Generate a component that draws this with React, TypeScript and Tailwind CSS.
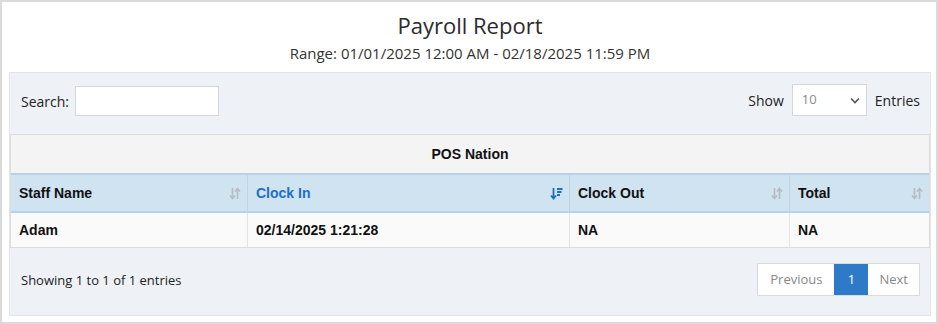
import React from "react";

const columns = [
  { label: "Staff Name", width: "w-[236px]", active: false },
  { label: "Clock In", width: "w-[322px]", active: true },
  { label: "Clock Out", width: "w-[220px]", active: false },
  { label: "Total", width: "flex-1", active: false },
];

const rows = [["Adam", "02/14/2025 1:21:28", "NA", "NA"]];

const SortBoth = () => (
  <svg width="12" height="13" viewBox="0 0 12 13" className="shrink-0">
    <path d="M3.5 1v10M1 8.5l2.5 3 2.5-3" fill="none" stroke="#b5bcc4" strokeWidth="1.6" />
    <path d="M8.5 12V2M6 4.5l2.5-3 2.5 3" fill="none" stroke="#b5bcc4" strokeWidth="1.6" />
  </svg>
);

const SortDown = () => (
  <svg width="13" height="13" viewBox="0 0 13 13" className="shrink-0">
    <path d="M3.5 1v10M1 8.5l2.5 3 2.5-3" fill="none" stroke="#1e6fc8" strokeWidth="1.8" />
    <path d="M7 2h5.5M7 5h4.5M7 8h3" fill="none" stroke="#1e6fc8" strokeWidth="1.8" />
  </svg>
);

export default function App() {
  return (
    <div className="w-[938px] h-[324px] border-2 border-[#dadada] bg-white pl-[7px] pr-[5px] flex flex-col font-['Open_Sans',sans-serif] text-[#222]">
      <div className="h-[70px] flex flex-col items-center">
        <h1 className="mt-[8px] text-[22px] leading-[30px] text-[#2b2b2b]">Payroll Report</h1>
        <p className="mt-[3px] text-[15px] leading-[21px] text-[#333]">
          Range: 01/01/2025 12:00 AM - 02/18/2025 11:59 PM
        </p>
      </div>

      <div className="h-[244px] bg-[#eef2f7] border border-[#e1e5ea] flex flex-col">
        <div className="h-[61px] flex items-start justify-between pl-[11px] pr-[10px] pt-[11px] text-[14px]">
          <label className="flex items-center gap-[6px] mt-[2px]">
            <span>Search:</span>
            <input className="w-[144px] h-[30px] bg-white border border-[#d4d7db] outline-none" />
          </label>
          <div className="flex items-center gap-[8px]">
            <span>Show</span>
            <div className="w-[75px] h-[32px] bg-white border border-[#d4d7db] flex items-center justify-between pl-[9px] pr-[6px]">
              <span className="text-[13px] text-[#8a8a8a]">10</span>
              <svg width="10" height="7" viewBox="0 0 10 7">
                <path d="M1 1.5l4 4 4-4" fill="none" stroke="#555" strokeWidth="1.6" />
              </svg>
            </div>
            <span>Entries</span>
          </div>
        </div>

        <div className="border border-[#dcdcdc] font-['Liberation_Sans',Arial,sans-serif] text-[14px] font-bold text-[#111]">
          <div className="h-[38px] bg-[#f4f4f4] flex items-center justify-center">POS Nation</div>
          <div className="h-[40px] bg-[#cfe3f0] border-y-2 border-[#b5d2e8] flex">
            {columns.map((c, i) => (
              <div
                key={c.label}
                className={`${c.width} flex items-center justify-between pl-[8px] pr-[6px] ${i > 0 ? "border-l border-[#bcd6ea]" : ""} ${c.active ? "text-[#1e6fc8]" : ""}`}
              >
                <span>{c.label}</span>
                {c.active ? <SortDown /> : <SortBoth />}
              </div>
            ))}
          </div>
          {rows.map((r) => (
            <div key={r[0]} className="h-[34px] bg-[#fafafa] flex">
              {r.map((v, i) => (
                <div
                  key={i}
                  className={`${columns[i].width} flex items-center px-[8px] ${i > 0 ? "border-l border-[#e4e4e4]" : ""}`}
                >
                  {v}
                </div>
              ))}
            </div>
          ))}
        </div>

        <div className="flex-1 flex items-start justify-between pl-[11px] pr-[10px] pt-[15px] text-[13px]">
          <span className="mt-[8px]">Showing 1 to 1 of 1 entries</span>
          <div className="flex h-[33px] border border-[#d9dcdf] bg-white">
            <span className="px-[12px] flex items-center text-[#888]">Previous</span>
            <span className="w-[34px] flex items-center justify-center bg-[#2f79c9] text-white">1</span>
            <span className="px-[11px] flex items-center text-[#888]">Next</span>
          </div>
        </div>
      </div>
    </div>
  );
}
